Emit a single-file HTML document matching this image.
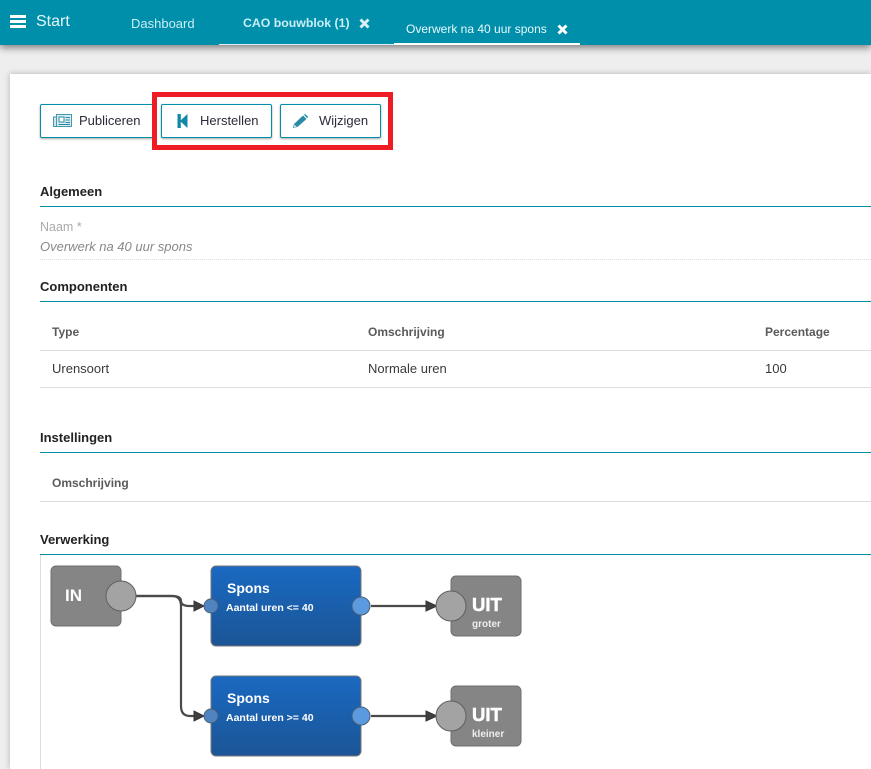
<!DOCTYPE html>
<html><head><meta charset="utf-8"><style>
html,body{margin:0;padding:0}
body{width:871px;height:769px;overflow:hidden;position:relative;background:#eee;font-family:"Liberation Sans",sans-serif;color:#333}
.a{position:absolute;white-space:nowrap;line-height:1}
.hdr{position:absolute;left:0;top:0;width:871px;height:45px;background:#008fab;box-shadow:0 3px 7px rgba(0,0,0,.45)}
.card{position:absolute;left:10px;top:74px;width:861px;height:695px;background:#fff;box-shadow:0 0 6px rgba(0,0,0,.25)}
.btn{position:absolute;top:104px;height:32px;border:1px solid #008fab;border-radius:2px;background:#fff;box-shadow:0 1px 2px rgba(0,0,0,.35)}
.h{font-weight:bold;font-size:13px;color:#222}
.ln{position:absolute;left:40px;width:831px;height:1px;background:#008fab}
.g{position:absolute;left:40px;width:831px;height:1px;background:#ddd}
.btxt{font-size:13px;color:#2b2b3a;top:114px}
.th{font-weight:bold;font-size:12px;color:#5a5a5a}
.td{font-size:13px;color:#3a3a3a}
</style></head><body>
<div class="card"></div>
<div class="hdr"></div>
<div class="a" style="left:10px;top:15px;width:16px;height:3px;background:#fff;box-shadow:0 5px 0 #fff,0 10px 0 #fff"></div>
<div class="a" style="left:36px;top:14px;font-size:16px;color:#e4f6fa">Start</div>
<div class="a" style="left:131px;top:17px;font-size:13px;color:#c9eef5">Dashboard</div>
<div class="a" style="left:243px;top:17px;font-size:12.3px;font-weight:bold;color:#c9eef5">CAO bouwblok (1)</div>
<svg class="a" style="left:359px;top:18px" width="11" height="11" viewBox="0 0 11 11"><path d="M1.5 1.5L9.5 9.5M9.5 1.5L1.5 9.5" stroke="#d8f0f5" stroke-width="3"/></svg>
<div class="a" style="left:219px;top:44px;width:175px;height:1px;background:#d8f0f5"></div>
<div class="a" style="left:406px;top:23px;font-size:12px;color:#eafafc">Overwerk na 40 uur spons</div>
<svg class="a" style="left:557px;top:24px" width="11" height="11" viewBox="0 0 11 11"><path d="M1.5 1.5L9.5 9.5M9.5 1.5L1.5 9.5" stroke="#fff" stroke-width="3"/></svg>
<div class="a" style="left:394px;top:43px;width:186px;height:2px;background:#fff"></div>

<div class="btn" style="left:40px;width:112px"></div>
<svg class="a" style="left:53px;top:114px" width="19" height="13" viewBox="0 0 19 13"><rect x="3.5" y=".5" width="15" height="12" fill="#dcecf0" stroke="#3f9ab2"/><path d="M.5 3v9.500h3V3z" fill="#cfe5ea" stroke="#3f9ab2"/><rect x="6" y="3" width="5" height="5" fill="#fff" stroke="#2d8aa3"/><path d="M12.500 3.500h4.500M12.500 6h4.500M12.500 8.500h4.500M5.500 10.500h11.500" stroke="#2d8aa3"/></svg>
<div class="a btxt" style="left:79px">Publiceren</div>
<div class="btn" style="left:161px;width:109px"></div>
<svg class="a" style="left:177px;top:114px" width="11" height="14" viewBox="0 0 11 14"><path d="M.5 0H3.800V14H.5zM3 7L10.500 0V14z" fill="#1188a8"/></svg>
<div class="a btxt" style="left:200px">Herstellen</div>
<div class="btn" style="left:280px;width:99px"></div>
<svg class="a" style="left:293px;top:114px" width="15" height="14" viewBox="0 0 15 14"><path d="M0 14L1 10 10 1.500 13.500 5 4.500 13z" fill="#2a8ba6"/><path d="M11 .8L12 0 15 2.800 14.200 4.200z" fill="#0f8fb0"/><path d="M1.500 10.500L3.800 12.800 1 13.500z" fill="#cfe3ea"/></svg>
<div class="a btxt" style="left:319px">Wijzigen</div>
<div class="a" style="left:152px;top:92px;width:231px;height:48px;border:5px solid #ee1c25"></div>

<div class="a h" style="left:40px;top:185px">Algemeen</div>
<div class="ln" style="top:206px"></div>
<div class="a" style="left:40px;top:221px;font-size:12.500px;color:#aaa">Naam *</div>
<div class="a" style="left:40px;top:240px;font-size:13px;font-style:italic;color:#888">Overwerk na 40 uur spons</div>
<div class="a" style="left:40px;top:259px;width:831px;border-top:1px dotted #ddd"></div>
<div class="a h" style="left:40px;top:280px">Componenten</div>
<div class="ln" style="top:301px"></div>
<div class="a th" style="left:52px;top:326px">Type</div>
<div class="a th" style="left:368px;top:326px">Omschrijving</div>
<div class="a th" style="left:765px;top:326px">Percentage</div>
<div class="g" style="top:350px"></div>
<div class="a td" style="left:52px;top:362px">Urensoort</div>
<div class="a td" style="left:368px;top:362px">Normale uren</div>
<div class="a td" style="left:765px;top:362px">100</div>
<div class="g" style="top:387px"></div>
<div class="a h" style="left:40px;top:431px">Instellingen</div>
<div class="ln" style="top:452px"></div>
<div class="a th" style="left:52px;top:477px">Omschrijving</div>
<div class="g" style="top:501px"></div>
<div class="a h" style="left:40px;top:533px">Verwerking</div>
<div class="ln" style="top:554px"></div>
<div class="a" style="left:40px;top:555px;width:1px;height:214px;background:#ddd"></div>

<svg class="a" style="left:0;top:0" width="871" height="769" viewBox="0 0 871 769">
<defs><linearGradient id="b" x1="0" y1="0" x2="0" y2="1"><stop offset="0" stop-color="#1a69c1"/><stop offset="1" stop-color="#1b5596"/></linearGradient></defs>
<rect x="51" y="566" width="70" height="60" rx="5" fill="#858585" stroke="#6f6f6f"/>
<rect x="211" y="566" width="150" height="80" rx="5" fill="url(#b)" stroke="#777"/>
<rect x="211" y="676" width="150" height="80" rx="5" fill="url(#b)" stroke="#777"/>
<rect x="451" y="576" width="70" height="60" rx="5" fill="#858585" stroke="#6f6f6f"/>
<rect x="451" y="686" width="70" height="60" rx="5" fill="#858585" stroke="#6f6f6f"/>
<g fill="none" stroke="#4a4a4a" stroke-width="2.200">
<path d="M136 596H172Q181 596 181 601Q181 606 190 606H196"/>
<path d="M136 596H172Q181 596 181 606V706Q181 716 190 716H196"/>
<path d="M371 606H428M371 716H428"/>
</g>
<path d="M194 601V611L204 606zM194 711V721L204 716zM426 601V611L437 606zM426 711V721L437 716z" fill="#3f3f3f" stroke="#333"/>
<circle cx="121" cy="596" r="15" fill="#a3a3a3" stroke="#5f5f5f"/>
<circle cx="451" cy="606" r="15" fill="#a3a3a3" stroke="#5f5f5f"/>
<circle cx="451" cy="716" r="15" fill="#a3a3a3" stroke="#5f5f5f"/>
<circle cx="211" cy="606" r="7" fill="#4f84c0" stroke="#4a5f78"/>
<circle cx="211" cy="716" r="7" fill="#4f84c0" stroke="#4a5f78"/>
<circle cx="361" cy="606" r="9" fill="#5b9ade" stroke="#4a5f78"/>
<circle cx="361" cy="716" r="9" fill="#5b9ade" stroke="#4a5f78"/>
<g font-family="Liberation Sans" font-weight="bold" fill="#fff">
<text x="65" y="601" font-size="17">IN</text>
<text x="227" y="593" font-size="14">Spons</text>
<text x="226" y="611" font-size="10.500">Aantal uren &lt;= 40</text>
<text x="227" y="703" font-size="14">Spons</text>
<text x="226" y="721" font-size="10.500">Aantal uren &gt;= 40</text>
<text x="472" y="611" font-size="18.500" stroke="#fff" stroke-width=".5">UIT</text>
<text x="472" y="721" font-size="18.500" stroke="#fff" stroke-width=".5">UIT</text>
<text x="472" y="627" font-size="10" fill="#eee">groter</text>
<text x="472" y="737" font-size="10" fill="#eee">kleiner</text>
</g>
</svg>
</body></html>
